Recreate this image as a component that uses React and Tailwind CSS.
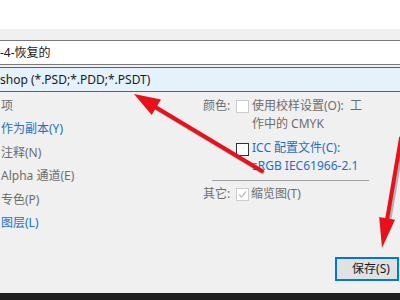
const font = { fontFamily: '"Noto Sans", "Noto Sans CJK SC", sans-serif' };

function Check({ dark, checked }) {
  return (
    <span
      className={`flex h-[13px] w-[13px] shrink-0 items-center justify-center border bg-white ${
        dark ? 'border-[#333333]' : 'border-[#cccccc]'
      }`}
    >
      {checked && (
        <svg width="9" height="9" viewBox="0 0 9 9">
          <path d="M1 4.5 L3.5 7 L8 1.5" fill="none" stroke="#bdbdbd" strokeWidth="1.2" />
        </svg>
      )}
    </span>
  );
}

const leftRows = [
  { label: '项', blue: false },
  { label: '作为副本(Y)', blue: true },
  { label: '注释(N)', blue: false },
  { label: 'Alpha 通道(E)', blue: false },
  { label: '专色(P)', blue: false },
  { label: '图层(L)', blue: true },
];

function Arrows() {
  return (
    <svg className="pointer-events-none absolute left-0 top-0" width="400" height="300">
      <g opacity="0.25" transform="translate(2 2)">
        <line x1="262" y1="171" x2="152" y2="105" stroke="#000" strokeWidth="4" />
        <line x1="401" y1="138" x2="387" y2="220" stroke="#000" strokeWidth="4" />
      </g>
      <line x1="262" y1="171" x2="152" y2="105" stroke="#e8101a" strokeWidth="4" strokeLinecap="round" />
      <polygon points="134,94 161,99.6 151.7,115" fill="#e8101a" />
      <line x1="401" y1="138" x2="387" y2="220" stroke="#e8101a" strokeWidth="4" strokeLinecap="round" />
      <polygon points="382,248 395,219.8 379.2,217" fill="#e8101a" />
    </svg>
  );
}

export default function App() {
  return (
    <div className="relative flex h-[300px] w-[400px] flex-col overflow-hidden bg-[#f0f0f0] text-[12px]" style={font}>
      <div className="h-[29px] shrink-0 bg-white" />
      <div className="mt-[11px] flex h-[25px] shrink-0 items-center border-y border-[#7a7a7a] bg-white text-[#1a1a1a]">
        -4-恢复的
      </div>
      <div className="mt-[2px] flex h-[25px] shrink-0 items-center border-y border-[#0078d7] bg-[#e5f1fb] text-[#1a1a1a]">
        shop (*.PSD;*.PDD;*.PSDT)
      </div>

      <div className="flex">
        <div className="w-[203px] pl-[1px] pt-[2px]">
          {leftRows.map((r) => (
            <div key={r.label} className={`h-[23.4px] leading-[23.4px] ${r.blue ? 'text-[#1e6fc7]' : 'text-[#6d6d6d]'}`}>
              {r.label}
            </div>
          ))}
        </div>

        <div className="w-[170px] pt-[5px] text-[#6d6d6d]">
          <div className="flex leading-[18px]">
            <span className="w-[33px]">颜色:</span>
            <div className="mt-[3px]"><Check /></div>
            <div className="ml-[3px] whitespace-nowrap">
              <div>使用校样设置(O):&nbsp; 工</div>
              <div>作中的 CMYK</div>
            </div>
          </div>
          <div className="mt-[6px] flex leading-[18px]">
            <span className="w-[33px]" />
            <div className="mt-[4px]"><Check dark /></div>
            <div className="ml-[3px] whitespace-nowrap text-[#1e6fc7]">
              <div>ICC 配置文件(C):</div>
              <div>sRGB IEC61966-2.1</div>
            </div>
          </div>
          <div className="ml-[9px] mt-[5px] h-px w-[157px] bg-[#a0a0a0]" />
          <div className="mt-[5px] flex leading-[16px]">
            <span className="w-[33px]">其它:</span>
            <div className="mt-[2px]"><Check checked /></div>
            <span className="ml-[2px]">缩览图(T)</span>
          </div>
        </div>
      </div>

      <div className="flex-1" />
      <div className="mb-[12px] flex justify-end pr-[1px]">
        <button className="flex h-[24px] w-[64px] items-center justify-center border-2 border-[#0078d7] bg-[#e1e1e1] pl-[8px] text-[#1a1a1a]">
          保存(S)
        </button>
      </div>
      <div className="h-[7px] shrink-0 bg-[#1e1e1e]" />

      <Arrows />
    </div>
  );
}
